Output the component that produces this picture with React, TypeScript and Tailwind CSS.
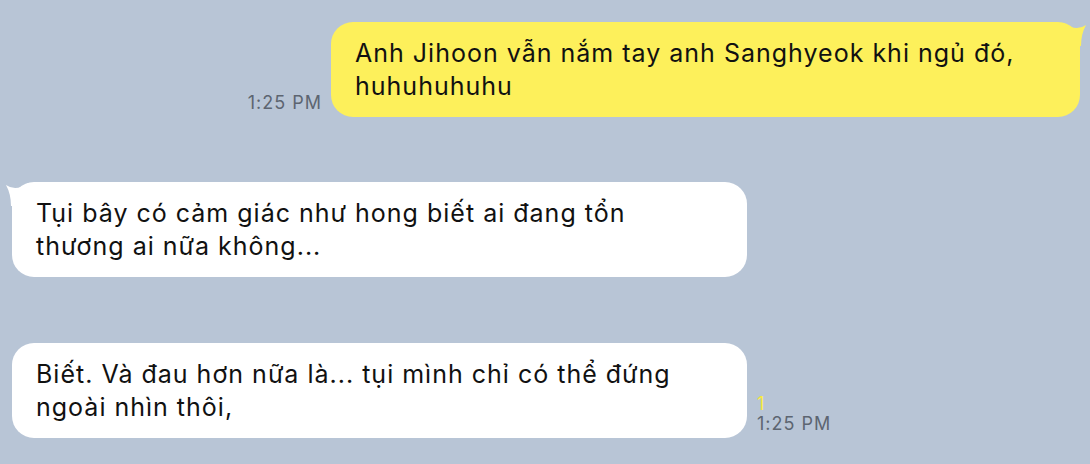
import React from 'react';

interface BubbleProps {
    text: React.ReactNode;
    mine?: boolean;
    tail?: boolean;
    width: string;
}

const Tail: React.FC<{ mine?: boolean }> = ({ mine }) => (
    <svg
        width="28"
        height="28"
        viewBox="0 0 28 28"
        className={mine ? 'absolute -right-[8px] -top-[2px]' : 'absolute -left-[8px] -top-[2px] -scale-x-100'}
    >
        <path d="M4 3 Q16 12 26 5 Q21 14 21 26 L4 26 Z" fill={mine ? '#fdf05b' : '#ffffff'} />
    </svg>
);

const Bubble: React.FC<BubbleProps> = ({ text, mine, tail, width }) => (
    <div
        className={`relative ${width} rounded-[22px] pl-[24px] pr-[28px] pt-[15px] pb-[14px] text-[25px] leading-[33px] tracking-[1px] text-[#111] ${
            mine ? 'bg-[#fdf05b]' : 'bg-white'
        }`}
    >
        {tail && <Tail mine={mine} />}
        <span className="relative">{text}</span>
    </div>
);

const Meta: React.FC<{ unread?: string }> = ({ unread }) => (
    <div className="flex flex-col pb-[4px] text-[18px] leading-[20px] tracking-[1px] text-[#5d6571]">
        {unread && <span className="text-[#f8ea3a]">{unread}</span>}
        <span>1:25 PM</span>
    </div>
);

const App: React.FC = () => {
    return (
        <div
            className="h-[464px] w-[1090px] bg-[#b8c5d6] pl-[12px] pr-[10px] pt-[22px]"
            style={{ fontFamily: 'Inter, "Liberation Sans", sans-serif' }}
        >
            <div className="flex items-end justify-end gap-[9px]">
                <Meta />
                <Bubble
                    mine
                    tail
                    width="w-[749px]"
                    text="Anh Jihoon vẫn nắm tay anh Sanghyeok khi ngủ đó, huhuhuhuhu"
                />
            </div>

            <div className="mt-[65px] flex items-end gap-[10px]">
                <Bubble
                    tail
                    width="w-[735px]"
                    text="Tụi bây có cảm giác như hong biết ai đang tổn thương ai nữa không..."
                />
            </div>

            <div className="mt-[66px] flex items-end gap-[10px]">
                <Bubble
                    width="w-[735px]"
                    text="Biết. Và đau hơn nữa là... tụi mình chỉ có thể đứng ngoài nhìn thôi,"
                />
                <Meta unread="1" />
            </div>
        </div>
    );
};

export default App;
